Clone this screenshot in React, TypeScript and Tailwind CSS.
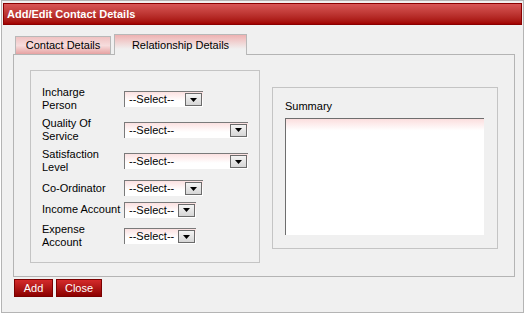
import React from 'react'

const font = "font-['Liberation_Sans',Arial,sans-serif]"

interface FieldRow {
  label: React.ReactNode
  height: string
  width: string
}

const rows: FieldRow[] = [
  { label: <>Incharge<br />Person</>, height: 'h-[30px]', width: 'w-[79px]' },
  { label: <>Quality Of<br />Service</>, height: 'h-[31px]', width: 'w-[124px]' },
  { label: <>Satisfaction<br />Level</>, height: 'h-[32px]', width: 'w-[124px]' },
  { label: 'Co-Ordinator', height: 'h-[22px]', width: 'w-[79px]' },
  { label: 'Income Account', height: 'h-[21px]', width: 'w-[72px]' },
  { label: <>Expense<br />Account</>, height: 'h-[32px]', width: 'w-[72px]' },
]

function ComboBox({ width }: { width: string }) {
  return (
    <div
      className={`relative ${width} h-[16px] border-t border-l border-[#7a7a7a] bg-gradient-to-b from-[#fbe1e1] to-white to-60%`}
    >
      <span className="block pl-[4px] text-[11px] leading-[14px] text-black whitespace-nowrap">--Select--</span>
      <div className="absolute right-[1px] top-[1px] w-[17px] h-[13px] border border-[#6b6b6b] bg-gradient-to-b from-[#f4f4f4] to-[#d6d6d6] flex items-center justify-center">
        <svg width="7" height="4" viewBox="0 0 7 4">
          <path d="M0 0h7L3.5 4z" fill="#000" />
        </svg>
      </div>
    </div>
  )
}

function RedButton({ children, width }: { children: React.ReactNode; width: string }) {
  return (
    <button
      className={`${width} h-[18px] border border-[#7a0000] bg-gradient-to-b from-[#d42a2a] to-[#8c0000] text-white text-[11px] leading-[16px] text-center`}
    >
      {children}
    </button>
  )
}

export default function App() {
  return (
    <div className={`${font} w-[526px] h-[316px] bg-white`}>
      <div className="ml-px w-[523px] h-[313px] border border-[#b4b4b4] bg-[#f0f0f0] p-px">
        <div className="mt-px h-[22px] border border-[#8a0000] bg-gradient-to-b from-[#d85656] to-[#a20000] flex items-center pl-[3px]">
          <span className="text-[11px] font-bold text-white leading-none">Add/Edit Contact Details</span>
        </div>

        <div className="ml-[10px] mt-[9px] w-[502px]">
          <div className="flex items-end pl-[2px] gap-[3px]">
            <div className="w-[96px] h-[18px] border border-b-0 border-[#b8b8b8] bg-gradient-to-b from-[#f0c2c2] via-[#f6dcdc] to-[#e6a2a2] flex items-center justify-center">
              <span className="text-[11px] text-black leading-none">Contact Details</span>
            </div>
            <div className="relative z-10 -mb-px w-[133px] h-[21px] border border-b-0 border-[#b8b8b8] bg-gradient-to-b from-[#eeb2b2] to-[#f0f0f0] to-70% flex items-center justify-center pt-[1px]">
              <span className="text-[11px] text-black leading-none">Relationship Details</span>
            </div>
          </div>

          <div className="h-[223px] border border-[#b4b4b4] flex items-start pl-[16px] pt-[15px] gap-[12px]">
            <div className="w-[230px] h-[193px] border border-[#c4c4c4] pl-[11px] pt-[13px]">
              {rows.map((row, i) => (
                <div key={i} className={`flex items-center ${row.height}`}>
                  <div className="w-[82px] text-[11px] leading-[13px] text-black whitespace-nowrap">{row.label}</div>
                  <ComboBox width={row.width} />
                </div>
              ))}
            </div>

            <div className="mt-[17px] w-[226px] h-[162px] border border-[#c4c4c4] pl-[12px] pt-[12px]">
              <div className="text-[11px] leading-[13px] text-black">Summary</div>
              <div className="mt-[5px] w-[199px] h-[117px] border-t border-l border-[#6e6e6e] bg-gradient-to-b from-[#fbdede] to-white to-[10%]" />
            </div>
          </div>
        </div>

        <div className="ml-[11px] mt-[2px] flex gap-[3px]">
          <RedButton width="w-[39px]">Add</RedButton>
          <RedButton width="w-[46px]">Close</RedButton>
        </div>
      </div>
    </div>
  )
}
